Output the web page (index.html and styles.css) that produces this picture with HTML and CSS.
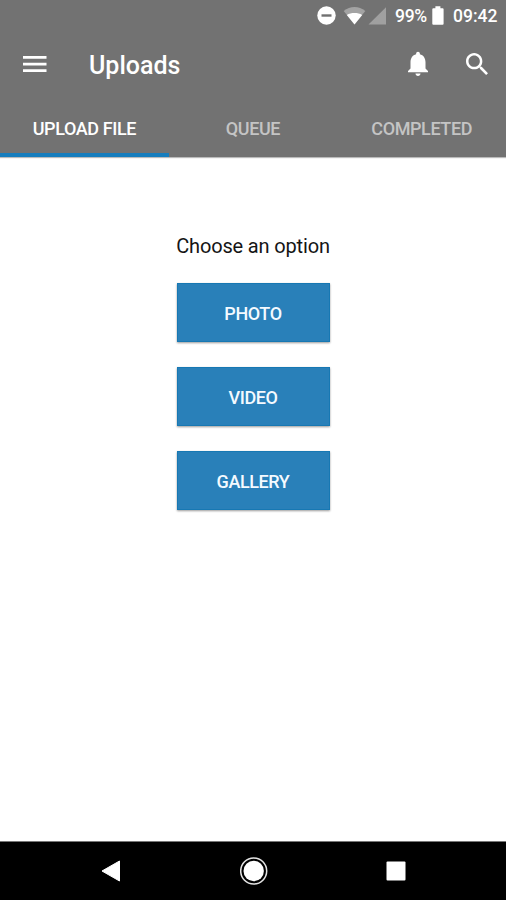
FILE: index.html
```html
<!DOCTYPE html>
<html lang="en">
<head>
<meta charset="utf-8">
<title>Uploads</title>
<link rel="stylesheet" href="styles.css">
</head>
<body>
<div class="screen">
  <header class="header">
    <div class="status">
      <svg class="status-icons" width="70" height="20" viewBox="0 0 70 20">
        <circle cx="9.5" cy="9.5" r="9.2" fill="#fff"/>
        <path d="M4.5 8.3h10v2.4h-10z" fill="#707070"/>
        <path d="M26.7 5C33-.2 42-.2 48.3 5L37.5 18.5z" fill="#a3a3a3"/>
        <path d="M29.8 9c4.5-2.6 11-2.6 15.4 0L37.5 18.5z" fill="#fff"/>
        <path d="M69 1.2v17.3H51.5z" fill="#a0a0a0"/>
      </svg>
      <span class="percent">99%</span>
      <svg class="battery" width="12" height="20" viewBox="0 0 12 20"><path d="M3.4.3h5v2h2.2q1 0 1 1v14.4q0 1-1 1H1.3q-1 0-1-1V3.3q0-1 1-1h2.1z" fill="#fff"/></svg>
      <span class="clock">09:42</span>
    </div>
    <div class="toolbar">
      <svg class="menu" width="24" height="18" viewBox="0 0 24 18"><path d="M0 1h23.5v2.7H0zM0 7.7h23.5v2.7H0zM0 14.3h23.5V17H0z" fill="#fff"/></svg>
      <h1 class="title">Uploads</h1>
      <svg class="bell" width="20" height="25" viewBox="4 2 16 20" preserveAspectRatio="none"><path d="M12 22c1.1 0 2-.9 2-2h-4c0 1.1.9 2 2 2zm6-6v-5c0-3.07-1.64-5.64-4.5-6.32V4c0-.83-.67-1.5-1.5-1.5s-1.5.67-1.5 1.5v.68C7.63 5.36 6 7.92 6 11v5l-2 2v1h16v-1l-2-2z" fill="#fff"/></svg>
      <svg class="search" width="22" height="22" viewBox="3 3 17.49 17.49"><path d="M15.5 14h-.79l-.28-.27C15.41 12.59 16 11.11 16 9.5 16 5.91 13.09 3 9.5 3S3 5.91 3 9.5 5.91 16 9.5 16c1.61 0 3.09-.59 4.23-1.57l.27.28v.79l5 4.99L20.49 19l-4.99-5zm-6 0C7.01 14 5 11.99 5 9.5S7.01 5 9.5 5 14 7.01 14 9.5 11.99 14 9.5 14z" fill="#fff"/></svg>
    </div>
    <nav class="tabs">
      <div class="tab active">UPLOAD FILE</div>
      <div class="tab">QUEUE</div>
      <div class="tab">COMPLETED</div>
    </nav>
  </header>
  <main class="content">
    <p class="prompt">Choose an option</p>
    <div class="button">PHOTO</div>
    <div class="button">VIDEO</div>
    <div class="button">GALLERY</div>
  </main>
  <footer class="navbar">
    <svg width="20" height="22" viewBox="0 0 20 22"><path d="M18.5 1v20L1 11z" fill="#fff" stroke="#fff" stroke-linejoin="round"/></svg>
    <svg width="28" height="28" viewBox="0 0 28 28"><circle cx="13.7" cy="14" r="13" fill="none" stroke="#e4e4e4" stroke-width="1.5"/><circle cx="13.7" cy="14" r="10.2" fill="#fff"/></svg>
    <svg width="20" height="20" viewBox="0 0 20 20"><rect x=".5" y=".5" width="19" height="19" rx="1" fill="#fff"/></svg>
  </footer>
</div>
</body>
</html>
```

FILE: styles.css
```css
* { box-sizing: border-box; }
body { margin: 0; font-family: Roboto, "Liberation Sans", sans-serif; }
svg { display: block; flex: none; }
.screen { width: 506px; height: 900px; display: flex; flex-direction: column; background: #fff; overflow: hidden; }
.header { height: 157px; flex: none; background: #727272; color: #fff; box-shadow: 0 1px 1px #bbb; }
.status { height: 32px; display: flex; align-items: center; padding-left: 317px; font-size: 17.5px; font-weight: 500; }
.percent { width: 33px; margin-left: 8px; letter-spacing: -.3px; white-space: nowrap; }
.battery { margin-left: 4px; }
.clock { margin-left: 9px; white-space: nowrap; }
.toolbar { height: 67px; display: flex; align-items: center; padding: 0 18px 4px 23px; }
.title { margin: 4px 0 0 42px; font-size: 25px; line-height: 30px; font-weight: 500; }
.bell { margin-left: auto; }
.search { margin-left: 38px; }
.tabs { height: 58px; display: grid; grid-template-columns: repeat(3, 1fr); }
.tab { padding-top: 19px; border-bottom: 4px solid transparent; text-align: center; font-size: 18px; line-height: 22px; font-weight: 500; letter-spacing: -.4px; color: #c4c4c4; white-space: nowrap; }
.tab.active { color: #fff; border-color: #167dbd; }
.content { flex: 1; display: flex; flex-direction: column; align-items: center; padding-top: 77px; }
.prompt { margin: 0 0 25px; height: 24px; font-size: 20px; line-height: 25px; letter-spacing: -.16px; color: #151515; white-space: nowrap; }
.button { width: 153px; height: 59px; margin-bottom: 25px; background: #2980b9; border: 1px solid #1778b3; box-shadow: 0 1px 2px rgba(0,0,0,.4); color: #f4faff; font-size: 18px; line-height: 59px; font-weight: 500; letter-spacing: -.4px; text-align: center; }
.navbar { height: 59px; flex: none; display: flex; align-items: center; justify-content: space-between; padding: 0 100px 0 101px; background: #000; border-top: 1px solid #777; }
```
